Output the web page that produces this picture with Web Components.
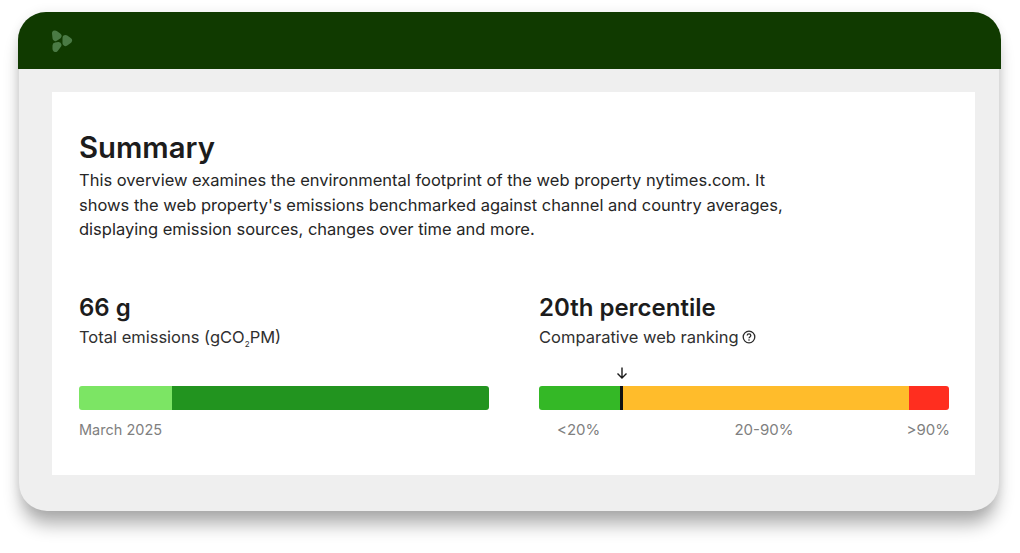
<!doctype html>
<html><head><meta charset="utf-8"><style>
html,body{margin:0;padding:0;background:#fff;}
body{width:1020px;height:553px;overflow:hidden;font-family:Inter,"Liberation Sans",sans-serif;}
</style></head><body>
<report-frame>
  <summary-intro title-text="Summary">This overview examines the environmental footprint of the web property nytimes.com. It shows the web property's emissions benchmarked against channel and country averages, displaying emission sources, changes over time and more.</summary-intro>
  <div slot="metrics" style="display:contents">
  <metric-block heading="66 g">
    <span slot="label">Total emissions (gCO<sub style="font-size:8px;line-height:0;vertical-align:-4px">2</sub>PM)</span>
    <seg-bar segments="#7ce564:93,#22941f:317"></seg-bar>
    <span slot="foot" style="display:flex"><span>March 2025</span></span>
  </metric-block>
  <metric-block heading="20th percentile">
    <span slot="label" style="display:inline-flex;align-items:center;gap:3px">Comparative web ranking <help-icon></help-icon></span>
    <seg-bar segments="#34b826:82,#ffbc2b:288,#ff2e1f:40" marker="82"></seg-bar>
    <span slot="foot" style="display:flex;justify-content:space-between;padding-left:18px;margin-right:-1px;font-size:15px"><span>&lt;20%</span><span style="margin-left:21px">20-90%</span><span>&gt;90%</span></span>
  </metric-block>
  </div>
</report-frame>
<script>
function def(name, html, setup){
  customElements.define(name, class extends HTMLElement{
    connectedCallback(){
      if(this.shadowRoot) return;
      const r=this.attachShadow({mode:'open'});
      r.innerHTML=html;
      if(setup) setup(this,r);
    }
  });
}
def('report-frame',`<style>
:host{display:block;box-sizing:border-box;width:1020px;height:553px;padding:12px 19px 0 18px}
.win{width:983px;height:499px;position:relative}
.shell{box-sizing:border-box;margin:0 2px 0 1px;width:980px;height:499px;background:#efefef;border-radius:28px;box-shadow:0 16px 18px -3px rgba(0,0,0,.32),0 0 12px rgba(0,0,0,.08);display:flex;flex-direction:column}
.top{height:57px;margin:0 -2px 0 -1px;background:#103a00;border-radius:28px 28px 0 0;display:flex;align-items:center;padding-left:33px;padding-bottom:1px;box-sizing:border-box;flex:none}
.sheet{margin:23px 24px 0 33px;height:383px;background:#fff;box-sizing:border-box;padding:39px 27px 0}
.metrics{display:grid;grid-template-columns:410px 410px;column-gap:50px;margin-top:52px}
</style>
<div class="win"><div class="shell">
<div class="top"><svg width="22" height="24" viewBox="0 0 22 24"><g fill="#4a7a44" stroke="#4a7a44" stroke-width="6" stroke-linejoin="round"><path d="M4 5.500 7.500 8 4.500 10z"/><path d="M14.500 10 18 12.500 14.500 15z"/><path d="M4.500 17.500 7.500 17 4.500 21z"/></g></svg></div>
<div class="sheet"><slot></slot><div class="metrics"><slot name="metrics"></slot></div></div>
</div></div>`);
def('summary-intro',`<style>
:host{display:block;color:#1c1c1c}
h1{margin:0;font:600 29.300px/33px Inter,"Liberation Sans",sans-serif}
p{margin:4px 0 0;font:400 16.500px/24.500px Inter,"Liberation Sans",sans-serif;width:720px;color:#262626}
</style><h1></h1><p><slot></slot></p>`,(h,r)=>{r.querySelector('h1').textContent=h.getAttribute('title-text')});
def('metric-block',`<style>
:host{display:block}
h2{margin:0;font:600 24px/28px Inter,"Liberation Sans",sans-serif;color:#1c1c1c}
.label{margin-top:3px;font:400 16.500px/24px Inter,"Liberation Sans",sans-serif;color:#303030;height:24px;display:flex;align-items:center}
.bar{margin-top:37px}
.foot{margin-top:10px;font:400 14.500px/20px Inter,"Liberation Sans",sans-serif;color:#808080}
</style><h2></h2><div class="label"><slot name="label"></slot></div><div class="bar"><slot></slot></div><div class="foot"><slot name="foot"></slot></div>`,(h,r)=>{r.querySelector('h2').textContent=h.getAttribute('heading')});
def('seg-bar',`<style>
:host{display:block}
.w{position:relative;display:flex;height:24px;border-radius:3px;overflow:hidden}
.o{position:relative}
.tick{position:absolute;top:0;width:3px;height:24px;background:#111}
.arr{position:absolute;top:-19px;width:12px;height:12px}
</style><div class="o"><div class="w"></div></div>`,(h,r)=>{
  const w=r.querySelector('.w');
  h.getAttribute('segments').split(',').forEach(s=>{const [c,n]=s.split(':');const d=document.createElement('div');d.style.cssText=`background:${c};width:${n}px;flex:none`;w.append(d)});
  const m=h.getAttribute('marker');
  if(m){const o=r.querySelector('.o');
    const t=document.createElement('div');t.className='tick';t.style.left=(+m-1)+'px';o.append(t);
    const a=document.createElementNS('http://www.w3.org/2000/svg','svg');a.setAttribute('class','arr');a.setAttribute('viewBox','0 0 12 12');a.style.left=(+m-5.500)+'px';
    a.innerHTML='<path d="M6 .5V11M1.500 6.500 6 11l4.500-4.500" fill="none" stroke="#1a1a1a" stroke-width="1.400"/>';o.append(a);}
});
def('help-icon',`<style>:host{display:inline-flex}</style><svg width="14" height="14" viewBox="0 0 14 14" fill="none" stroke="#2a2a2a" stroke-width="1.300"><circle cx="7" cy="7" r="5.800"/><path d="M5.200 5.600c0-1 .8-1.700 1.800-1.700s1.800.7 1.800 1.600c0 1.400-1.800 1.400-1.800 2.700"/><circle cx="7" cy="10" r=".8" fill="#2a2a2a" stroke="none"/></svg>`);
</script>
</body></html>
